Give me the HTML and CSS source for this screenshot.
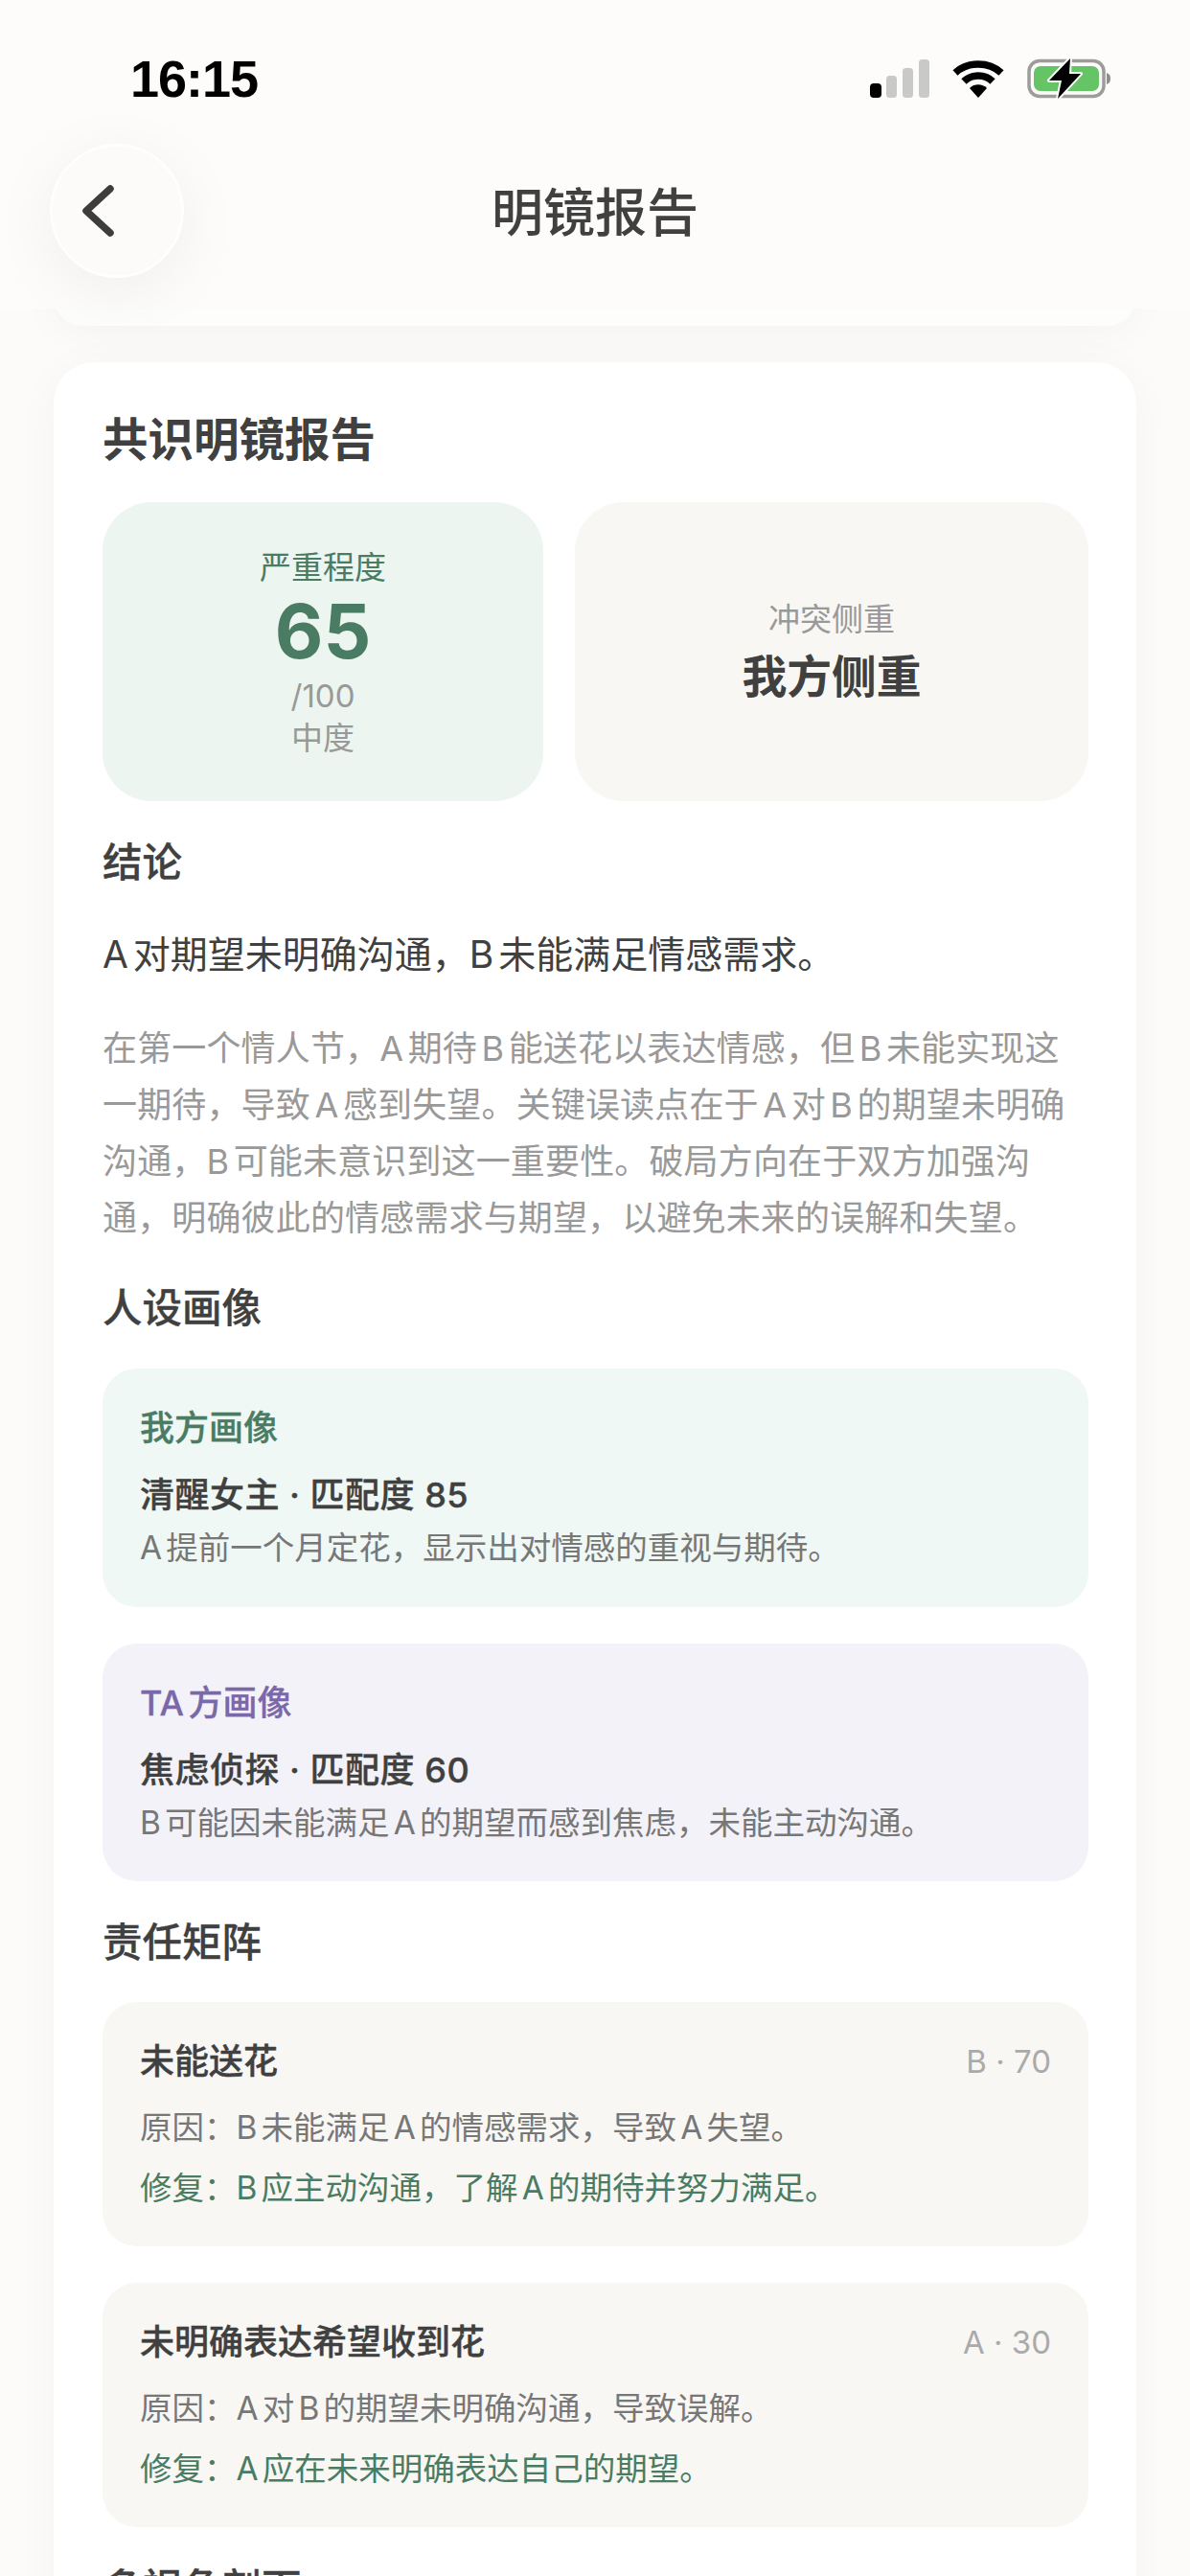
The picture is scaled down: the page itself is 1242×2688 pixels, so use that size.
FILE: index.html
```html
<!DOCTYPE html>
<html lang="zh-CN">

<head>
    <meta charset="UTF-8">
    <meta name="viewport" content="width=device-width, initial-scale=1.0">
    <title>明镜报告</title>
    <link rel="stylesheet" href="styles.css">
</head>

<body>
    <div class="header">
        <div class="status-bar">
            <span class="time">16:15</span>
            <div class="status-icons">
                <svg class="icon-signal" width="62" height="42" viewBox="0 0 62 42">
                    <rect x="0" y="26" width="12" height="15" rx="4" fill="#000" />
                    <rect x="17" y="18" width="11" height="23" rx="3.5" fill="#c9c9c7" />
                    <rect x="34" y="10" width="11" height="31" rx="3.5" fill="#c9c9c7" />
                    <rect x="51" y="1" width="11" height="40" rx="3.5" fill="#c9c9c7" />
                </svg>
                <svg class="icon-wifi" width="54" height="42" viewBox="0 0 54 42">
                    <path d="M3 15 C16 3 38 3 51 15" fill="none" stroke="#000" stroke-width="7.5" stroke-linejoin="round" />
                    <path d="M12 24 C20 16 34 16 42 24" fill="none" stroke="#000" stroke-width="7.5" />
                    <path d="M18 31 C23 26 31 26 36 31 L27 41 Z" fill="#000" />
                </svg>
                <svg class="icon-battery" width="88" height="44" viewBox="0 0 88 44">
                    <rect x="2" y="3.5" width="78" height="37" rx="11" fill="none" stroke="#9c9c9a" stroke-width="3.5" />
                    <rect x="7" y="9" width="68" height="26" rx="7" fill="#65c466" />
                    <path d="M83 16 C86 17 87 19 87 22 C87 25 86 27 83 28 Z" fill="#8e8e8c" />
                    <path d="M45 1 L23 24 L36 24 L32 43 L56 17 L44 17 Z" fill="#000" stroke="#fdfcfa" stroke-width="4" stroke-linejoin="round" paint-order="stroke" />
                </svg>
            </div>
        </div>
        <div class="nav">
            <div class="back-btn">
                <svg width="40" height="60" viewBox="0 0 40 60">
                    <path d="M29 7 L4 30 L29 53" fill="none" stroke="#3d3d3d" stroke-width="7.5" stroke-linecap="round" stroke-linejoin="round" />
                </svg>
            </div>
            <div class="nav-title">明镜报告</div>
        </div>
    </div>

    <div class="prev-card"></div>

    <div class="card">
        <h1 class="card-title">共识明镜报告</h1>

        <div class="stats">
            <div class="stat stat-green">
                <div class="stat-label">严重程度</div>
                <div class="stat-score">65</div>
                <div class="stat-note">/100</div>
                <div class="stat-note">中度</div>
            </div>
            <div class="stat stat-grey">
                <div class="stat-note">冲突侧重</div>
                <div class="stat-value">我方侧重</div>
            </div>
        </div>

        <h2 class="section-title">结论</h2>
        <p class="summary">A对期望未明确沟通，B未能满足情感需求。</p>
        <p class="detail">在第一个情人节，A期待B能送花以表达情感，但B未能实现这一期待，导致A感到失望。关键误读点在于A对B的期望未明确沟通，B可能未意识到这一重要性。破局方向在于双方加强沟通，明确彼此的情感需求与期望，以避免未来的误解和失望。</p>

        <h2 class="section-title">人设画像</h2>
        <div class="persona persona-me">
            <div class="persona-side">我方画像</div>
            <div class="persona-name">清醒女主 · 匹配度 85</div>
            <div class="persona-desc">A提前一个月定花，显示出对情感的重视与期待。</div>
        </div>
        <div class="persona persona-ta">
            <div class="persona-side">TA方画像</div>
            <div class="persona-name">焦虑侦探 · 匹配度 60</div>
            <div class="persona-desc">B可能因未能满足A的期望而感到焦虑，未能主动沟通。</div>
        </div>

        <h2 class="section-title">责任矩阵</h2>
        <div class="duty">
            <div class="duty-head">
                <span class="duty-name">未能送花</span>
                <span class="duty-score">B · 70</span>
            </div>
            <div class="duty-cause">原因：B未能满足A的情感需求，导致A失望。</div>
            <div class="duty-fix">修复：B应主动沟通，了解A的期待并努力满足。</div>
        </div>
        <div class="duty">
            <div class="duty-head">
                <span class="duty-name">未明确表达希望收到花</span>
                <span class="duty-score">A · 30</span>
            </div>
            <div class="duty-cause">原因：A对B的期望未明确沟通，导致误解。</div>
            <div class="duty-fix">修复：A应在未来明确表达自己的期望。</div>
        </div>

        <h2 class="section-title">多视角剖面</h2>
    </div>
</body>

</html>
```

FILE: styles.css
```css
* {
    margin: 0;
    padding: 0;
    box-sizing: border-box;
}

html,
body {
    height: 100%;
    overflow: hidden;
}

body {
    background-color: #fcfbf9;
    font-family: "Inter", "Noto Sans CJK SC", sans-serif;
    color: #404040;
    text-autospace: normal;
}

/* top bar */
.header {
    position: relative;
    z-index: 2;
    height: 322px;
    background-color: #fdfcfa;
}

.status-bar {
    display: flex;
    justify-content: space-between;
    align-items: center;
    height: 150px;
    padding: 14px 82px 0 136px;
}

.time {
    font-family: "Liberation Sans", sans-serif;
    font-size: 54px;
    font-weight: 700;
    letter-spacing: -1px;
    color: #000;
}

.status-icons {
    display: flex;
    align-items: center;
}

.icon-signal {
    margin-right: 24px;
}

.icon-wifi {
    margin-right: 24px;
}

.nav {
    display: grid;
    grid-template-columns: 140px 1fr 140px;
    align-items: center;
    padding: 0 52px;
}

.back-btn {
    display: flex;
    align-items: center;
    justify-content: center;
    width: 140px;
    height: 140px;
    border-radius: 50%;
    border: 3px solid #fefefd;
    background-color: #fcfbf9;
    box-shadow: 0 14px 70px rgba(0, 0, 0, 0.06);
    padding-right: 32px;
}

.nav-title {
    padding-top: 6px;
    text-align: center;
    font-size: 54px;
    font-weight: 500;
    line-height: 70px;
}

.prev-card {
    height: 60px;
    margin: -42px 56px 0;
    border-radius: 42px;
    background-color: #fdfdfc;
    box-shadow: 0 6px 48px rgba(0, 0, 0, 0.035);
}

/* report card */
.card {
    margin: 38px 56px 0;
    padding: 49px 50px 0 51px;
    height: 2400px;
    border-radius: 42px;
    background-color: #fff;
    box-shadow: 0 6px 48px rgba(0, 0, 0, 0.035);
}

.card-title {
    font-size: 47.5px;
    font-weight: 600;
    line-height: 64px;
}

.stats {
    display: grid;
    grid-template-columns: 460fr 536fr;
    gap: 33px;
    margin-top: 33px;
}

.stat {
    display: flex;
    flex-direction: column;
    align-items: center;
    justify-content: center;
    height: 312px;
    border-radius: 51px;
    text-align: center;
}

.stat-green {
    padding-top: 2px;
    background-color: #edf5f0;
}

.stat-grey {
    padding-top: 4px;
    background-color: #f8f7f3;
}

.stat-label {
    font-size: 33px;
    line-height: 44px;
    color: #4a7c63;
}

.stat-score {
    font-size: 78px;
    font-weight: 700;
    line-height: 90px;
    color: #4a7c63;
}

.stat-note {
    font-size: 33px;
    line-height: 44px;
    color: #999;
}

.stat-value {
    margin-top: 4px;
    font-size: 46.8px;
    font-weight: 600;
    line-height: 68px;
}

.section-title {
    margin-top: 36px;
    font-size: 41.5px;
    font-weight: 500;
    line-height: 56px;
    -webkit-text-stroke: 0.3px #404040;
}

.summary {
    margin-top: 40px;
    font-size: 39px;
    line-height: 56px;
}

.detail {
    margin-top: 41px;
    font-size: 36px;
    letter-spacing: 0.15px;
    line-height: 59px;
    color: #999;
}

/* personas */
.persona {
    margin-bottom: 38px;
    padding: 37px 39px 39px;
    border-radius: 36px;
}

.section-title + .persona {
    margin-top: 35px;
}

.persona-me {
    background-color: #eff8f4;
}

.persona-ta {
    padding-bottom: 38px;
    background-color: #f3f2f9;
    margin-bottom: 0;
}

.persona-side {
    font-size: 36px;
    font-weight: 500;
    line-height: 50px;
    -webkit-text-stroke: 0.3px;
}

.persona-me .persona-side {
    color: #4a7c63;
}

.persona-ta .persona-side {
    color: #7b68a8;
}

.persona-name {
    margin-top: 20px;
    font-size: 36px;
    font-weight: 500;
    letter-spacing: 0.5px;
    line-height: 50px;
    -webkit-text-stroke: 0.4px #404040;
}

.persona-desc {
    margin-top: 7px;
    font-size: 33.5px;
    line-height: 46px;
    color: #777;
}

/* responsibility */
.duty {
    margin-bottom: 38px;
    padding: 36px 39px 38px;
    border-radius: 36px;
    background-color: #f8f7f3;
}

.section-title + .duty {
    margin-top: 34px;
}

.duty:last-of-type {
    margin-bottom: 0;
}

.duty-head {
    display: flex;
    justify-content: space-between;
    align-items: center;
    line-height: 52px;
}

.duty-name {
    font-size: 36px;
    font-weight: 500;
    -webkit-text-stroke: 0.4px #404040;
}

.duty-score {
    font-size: 33px;
    color: #aaa;
}

.duty-cause {
    margin-top: 20px;
    font-size: 33.5px;
    line-height: 46px;
    color: #777;
}

.duty-fix {
    margin-top: 17px;
    font-size: 33.5px;
    line-height: 46px;
    color: #4a7c63;
}
```
